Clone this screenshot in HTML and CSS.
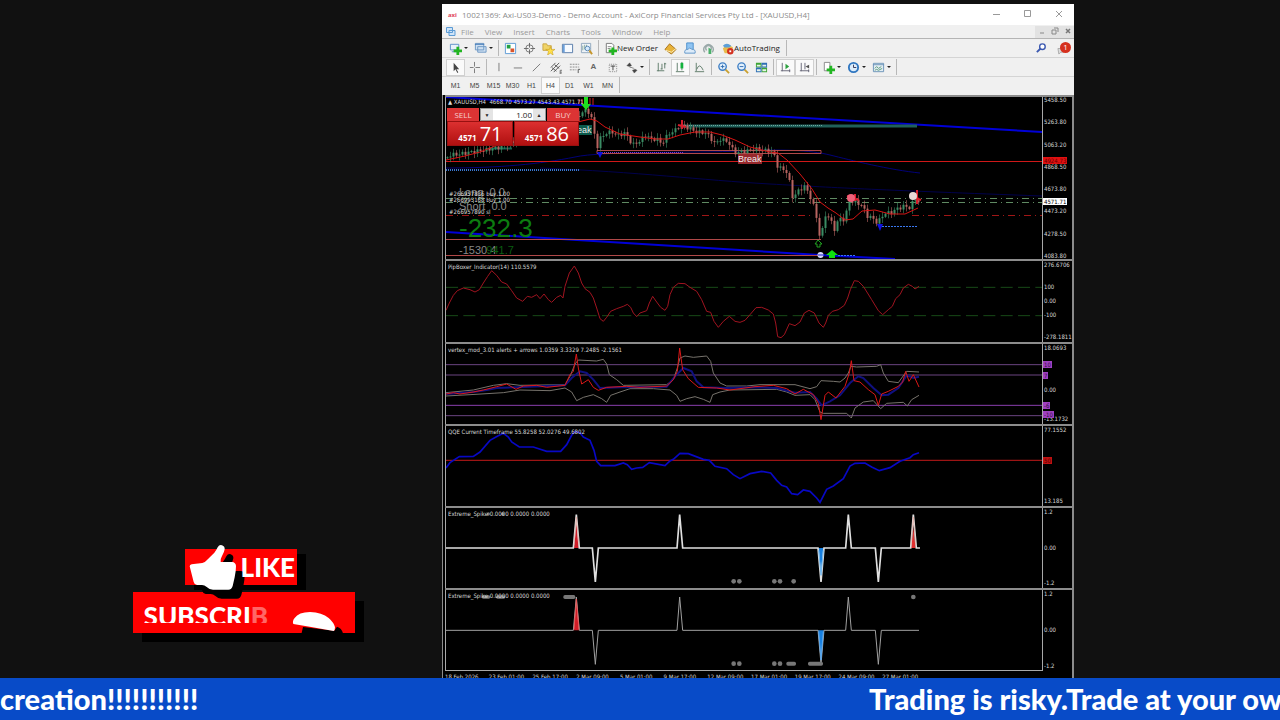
FILE: index.html
```html
<!DOCTYPE html>
<html lang="en">
<head>
    <meta charset="UTF-8">
    <meta name="viewport" content="width=device-width, initial-scale=1.0">
    <title>XAUUSD live</title>
    <link rel="stylesheet" href="styles.css">
</head>
<body>
    <main class="stage">
        <aside class="promo">
            <button class="like">
                <svg class="thumb" viewBox="200 24 174 174" aria-hidden="true">
                    <path fill="#000" transform="translate(26 27)" d="M208 94q0-5 6-6l32-4q8-2 14-9l22-22q6-7 10-16q5-9 13-6q9 3 8 12q-1 8-8 20q-6 10-4 18h34q11 1 12 12q0 16-4 34l-6 26q-3 11-13 11h-46q-12-1-20-9q-5-5-13-5h-15q-8-1-10-9z"/>
                    <path fill="#fff" d="M208 94q0-5 6-6l32-4q8-2 14-9l22-22q6-7 10-16q5-9 13-6q9 3 8 12q-1 8-8 20q-6 10-4 18h34q11 1 12 12q0 16-4 34l-6 26q-3 11-13 11h-46q-12-1-20-9q-5-5-13-5h-15q-8-1-10-9z"/>
                </svg>
                <span class="like-text">LIKE</span>
            </button>
            <button class="subscribe">
                <span class="sub-text">SUBSCRI<span class="fade">B</span></span>
                <svg class="glove" viewBox="510 225 165 75" aria-hidden="true">
                    <path fill="#000" d="M545 293l4-17 94 11 8-12q14 4 18 20v5H545z"/>
                    <path fill="#fff" d="M520 267q-4-8 4-18q12-18 46-18q36 2 56 18q16 14 19 28q0 9-4 11q-60-11-121-21z"/>
                </svg>
            </button>
        </aside>

        <section class="window">
            <header class="titlebar">
                <b class="brand">axi</b>
                <span class="title">10021369: Axi-US03-Demo - Demo Account - AxiCorp Financial Services Pty Ltd - [XAUUSD,H4]</span>
                <button class="win-btn" aria-label="Minimize"><svg width="10" height="10"><path d="M1 5.500h7" stroke="#999"/></svg></button>
                <button class="win-btn" aria-label="Maximize"><svg width="10" height="10"><path d="M1.500 1.500h6v6h-6z" stroke="#999" fill="none"/></svg></button>
                <button class="win-btn" aria-label="Close"><svg width="10" height="10"><path d="M2 2l6 6M8 2l-6 6" stroke="#999"/></svg></button>
            </header>

            <nav class="menu">
                <svg width="11" height="11"><path d="M1.500 1.500h6v5h-6zM4 4.500h6v5H4z" fill="#cfe4f8" stroke="#5b9bd5"/></svg>
                <a href="#">File</a><a href="#">View</a><a href="#">Insert</a><a href="#">Charts</a><a href="#">Tools</a><a href="#">Window</a><a href="#">Help</a>
                <span class="child-btns">
                    <button aria-label="Minimize chart"><svg width="8" height="8"><path d="M2 6h4" stroke="#888"/></svg></button>
                    <button aria-label="Restore chart"><svg width="8" height="8"><path d="M3 1h4v4M1 3h4v4H1z" stroke="#888" fill="none"/></svg></button>
                    <button aria-label="Close chart"><svg width="8" height="8"><path d="M2 2l4 4M6 2l-4 4" stroke="#777" stroke-width="1.500"/></svg></button>
                </span>
            </nav>

            <div class="toolbar standard">
                <button class="tool drop" aria-label="New chart"><svg viewBox="0 0 14 14"><path d="M1.500 2.500h9v6h-9zM3 10.500h6" fill="#e8f1fb" stroke="#5b8fc7"/><path d="M8 5h3v3h3v3h-3v3H8v-3H5V8h3z" fill="#22b522"/></svg></button>
                <button class="tool drop" aria-label="Profiles"><svg viewBox="0 0 14 14"><path d="M1.500 1.500h9v7h-9zM4 5h9v6H4z" fill="#cfe0f2" stroke="#6c97c4"/><path d="M1 2.500h10" stroke="#3f77b5"/></svg></button>
                <i class="sep"></i>
                <button class="tool" aria-label="Market watch"><svg viewBox="0 0 14 14"><path d="M1.500 1.500h11v11h-11z" fill="#fff" stroke="#5b9bd5"/><path d="M3 3h4v4H3z" fill="#23a045"/><path d="M7 7h4v4H7z" fill="#d9542b"/></svg></button>
                <button class="tool" aria-label="Data window"><svg viewBox="0 0 14 14"><circle cx="7" cy="7" r="4" fill="none" stroke="#777"/><path d="M7 1v5M7 8v5M1 7h5M8 7h5" stroke="#666"/></svg></button>
                <button class="tool" aria-label="Navigator"><svg viewBox="0 0 14 14"><path d="M1 2h4l1 2h4v5H1z" fill="#f0d468" stroke="#c9a544"/><path d="M9 5l1 3h4l-3 2 1 4-3-2-3 2 1-4-3-2h4z" fill="#ffe04a" stroke="#c79b1b" stroke-width=".6"/></svg></button>
                <button class="tool" aria-label="Terminal"><svg viewBox="0 0 14 14"><path d="M1.500 2.500h11v9h-11z" fill="#f6faff" stroke="#5479a8"/><path d="M3 3v8" stroke="#6aa0dc" stroke-width="2"/></svg></button>
                <button class="tool" aria-label="Strategy tester"><svg viewBox="0 0 14 14"><path d="M1.500 1.500h10v10h-10z" fill="#eef3f8" stroke="#8fa6bd"/><path d="M3 9V4M5 8V3M7 6V3" stroke="#8a9"/><circle cx="8" cy="7" r="2.500" fill="#d4e9fb" stroke="#5586b8"/><path d="M10 9l3 4" stroke="#c7962a" stroke-width="2"/></svg></button>
                <i class="sep"></i>
                <button class="tool wide order"><svg viewBox="0 0 14 14"><path d="M2.500 1.500h6l2 2v8h-8z" fill="#fff" stroke="#777"/><path d="M4 5h4M4 7h3" stroke="#888"/><path d="M8 6h3v2h3v3h-3v3H8v-3H5V8h3z" fill="#22b522"/></svg>New Order</button>
                <button class="tool" aria-label="MetaEditor"><svg viewBox="0 0 14 14"><path d="M1 8l5-6 7 6-5 5z" fill="#e7b23a" stroke="#a8731b"/><path d="M2 9l6 2 5-4" stroke="#fff3c4" fill="none"/></svg></button>
                <button class="tool" aria-label="MQL5 community"><svg viewBox="0 0 14 14"><path d="M4 1h7v7H4z" fill="#8fc4f2" stroke="#4b8ecb"/><path d="M2 12q-1-4 3-4 2-3 5 0 4 0 3 4z" fill="#dcebf9" stroke="#5f94c8"/></svg></button>
                <button class="tool" aria-label="Signals"><svg viewBox="0 0 14 14"><path d="M3 11a5 5 0 1 1 8 0M5 9a3 3 0 1 1 4 0" fill="none" stroke="#9aa9a9" stroke-width="1.500"/><path d="M7 6v7h3V8z" fill="#49b06a"/></svg></button>
                <button class="tool wide auto"><svg viewBox="0 0 14 14"><path d="M2 7l5-5 6 4-4 6H4z" fill="#e8bb4a"/><path d="M2 4q4-4 9 0l-2 2H4z" fill="#5c9fd8"/><circle cx="10" cy="10" r="3.500" fill="#d3301f"/><path d="M9 9h2v2H9z" fill="#fff"/></svg>AutoTrading</button>
                <i class="sep"></i>
                <span class="status">
                    <button class="tool" aria-label="Search"><svg viewBox="0 0 14 14"><circle cx="8" cy="5" r="3" fill="#fff" stroke="#3b58b0" stroke-width="1.500"/><path d="M6 7l-4 4" stroke="#3b58b0" stroke-width="2"/></svg></button>
                    <button class="tool" aria-label="Notifications"><svg viewBox="0 0 14 14"><path d="M1 7h6v4H4l-2 2z" fill="#ddd" stroke="#aaa"/></svg><span class="badge">1</span></button>
                </span>
            </div>

            <div class="toolbar">
                <button class="tool on" aria-label="Cursor"><svg viewBox="0 0 14 14"><path d="M5 2v9l2-2 2 4 1-1-2-3h3z" fill="#444"/></svg></button>
                <button class="tool" aria-label="Crosshair"><svg viewBox="0 0 14 14"><path d="M7 1v5M7 8v5M2 7h4M8 7h5" stroke="#777"/></svg></button>
                <i class="sep"></i>
                <button class="tool" aria-label="Vertical line"><svg viewBox="0 0 14 14"><path d="M7.500 2v9" stroke="#777"/></svg></button>
                <button class="tool" aria-label="Horizontal line"><svg viewBox="0 0 14 14"><path d="M3 7.500h9" stroke="#777"/></svg></button>
                <button class="tool" aria-label="Trendline"><svg viewBox="0 0 14 14"><path d="M3 11l8-8" stroke="#777"/></svg></button>
                <button class="tool" aria-label="Channel"><svg viewBox="0 0 14 14"><path d="M2 11l9-9M2 7l5-5M5 12l7-7M3 7l5 4M6 4l5 4" stroke="#555"/><path d="M12 10v4m0-4h2m-2 2h2m-2 2h2" stroke="#555" stroke-width=".8"/></svg></button>
                <button class="tool" aria-label="Fibonacci"><svg viewBox="0 0 14 14"><path d="M2 3.500h10M2 6.500h10M2 9.500h7" stroke="#888" stroke-dasharray="2 1"/><path d="M11 13v-4h2" stroke="#555" fill="none"/></svg></button>
                <button class="tool letter">A</button>
                <button class="tool" aria-label="Text label"><svg viewBox="0 0 14 14"><path d="M3.500 3.500h8v8h-8z" fill="none" stroke="#888" stroke-dasharray="1 1"/><path d="M5 5.500h5M7.500 5v5" stroke="#444"/></svg></button>
                <button class="tool drop" aria-label="Arrows"><svg viewBox="0 0 14 14"><path d="M2 5l3-3 2 3-2 1zM8 10l3-1 2 1-3 3zM5 7h2l3 1" fill="#444" stroke="#555" stroke-width=".5"/></svg></button>
                <i class="sep"></i>
                <button class="tool" aria-label="Bar chart"><svg viewBox="0 0 14 14"><path d="M3.500 2v9M2 10.500h8M7.500 3v6M10.500 2v6M6 8.500h2M10 3h2" stroke="#5d7a68"/></svg></button>
                <button class="tool on" aria-label="Candlesticks"><svg viewBox="0 0 14 14"><path d="M3.500 2v9M2 11.500h9M8.500 1v9" stroke="#5d7a68"/><path d="M7 2h3v6H7z" fill="#12b23c"/></svg></button>
                <button class="tool" aria-label="Line chart"><svg viewBox="0 0 14 14"><path d="M3.500 2v9M2 11.500h10M4 9q3-8 7 1" stroke="#5d7a68" fill="none"/></svg></button>
                <i class="sep"></i>
                <button class="tool" aria-label="Zoom in"><svg viewBox="0 0 14 14"><path d="M9 9l4 4" stroke="#c9a02f" stroke-width="2"/><circle cx="6" cy="6" r="4" fill="#e3f1fd" stroke="#3f7fc4" stroke-width="1.500"/><path d="M4 6h4M6 4v4" stroke="#2d6bb0"/></svg></button>
                <button class="tool" aria-label="Zoom out"><svg viewBox="0 0 14 14"><path d="M9 9l4 4" stroke="#c9a02f" stroke-width="2"/><circle cx="6" cy="6" r="4" fill="#e3f1fd" stroke="#3f7fc4" stroke-width="1.500"/><path d="M4 6h4" stroke="#2d6bb0"/></svg></button>
                <button class="tool" aria-label="Tile windows"><svg viewBox="0 0 14 14"><path d="M1 2h6v5H1zM7 7h6v5H7z" fill="#3fa535"/><path d="M7 2h6v5H7zM1 7h6v5H1z" fill="#2f6fb5"/><path d="M2 4h4v2H2zM8 4h4v2H8zM2 9h4v2H2zM8 9h4v2H8z" fill="#e8f3ea"/></svg></button>
                <i class="sep"></i>
                <button class="tool on" aria-label="Auto scroll"><svg viewBox="0 0 14 14"><path d="M3.500 2v9M2 10.500h10M11.500 9v3" stroke="#667" fill="none"/><path d="M7 3l4 3-4 3z" fill="#2ca13f"/></svg></button>
                <button class="tool on" aria-label="Chart shift"><svg viewBox="0 0 14 14"><path d="M3.500 2v9M2 10.500h10M7.500 2v7M11.500 9v3" stroke="#667"/><path d="M12 4v4L8 6z" fill="#555"/></svg></button>
                <i class="sep"></i>
                <button class="tool drop" aria-label="Indicators"><svg viewBox="0 0 14 14"><path d="M2.500 1.500h6v9h-6z" fill="#fff" stroke="#888"/><path d="M8 5h3v3h3v3h-3v3H8v-3H5V8h3z" fill="#22b522"/></svg></button>
                <button class="tool drop" aria-label="Periods"><svg viewBox="0 0 14 14"><circle cx="7" cy="7" r="5" fill="#dcedfb" stroke="#2f76c0" stroke-width="2"/><path d="M7 4v3h3" stroke="#335" fill="none"/></svg></button>
                <button class="tool drop" aria-label="Templates"><svg viewBox="0 0 14 14"><path d="M1.500 2.500h11v9h-11z" fill="#e3edf4" stroke="#6a93b8"/><path d="M1 4h12" stroke="#6a93b8"/><path d="M3 8l2-2 2 2 3-2M3 10l2-1 2 1 4-2" stroke="#5a9a78" fill="none"/></svg></button>
                <i class="sep"></i>
            </div>

            <div class="toolbar periods">
                <button class="tool">M1</button><button class="tool">M5</button><button class="tool">M15</button><button class="tool">M30</button><button class="tool">H1</button><button class="tool on">H4</button><button class="tool">D1</button><button class="tool">W1</button><button class="tool">MN</button>
                <i class="sep"></i>
            </div>

            <div class="charts">
                <!-- price -->
                <div class="panel main">
                    <div class="plot">
                        <svg viewBox="446 97 596 162" preserveAspectRatio="none" fill="none">
                            <path d="M446 168C500 168 540 164 575 157C600 151 700 153 740 151S810 150 830 155S890 170 920 173" stroke="#000078"/>
                            <path d="M540 168C640 172 700 180 770 184S880 190 1042 196" stroke="#00004c"/>
                            <path d="M446 97L1042 132M446 232L820 255L895 259" stroke="#0000d8" stroke-width="2"/>
                            <path d="M446 170h134" stroke="#3a78d0" stroke-width="2" stroke-dasharray="1 1"/>
                            <path d="M446 161.500h596" stroke="#d01818"/>
                            <path d="M446 198.500h596M446 202.500h596" stroke="#5f8a62" stroke-dasharray="7 4 1 4"/>
                            <path d="M446 215.500h366M912 215.500h130" stroke="#a01616" stroke-dasharray="7 4 1 4"/>
                            <path d="M446 239.500h375M446 255.500h375M597 150.500h224v3h-224z" stroke="#b04848"/>
                            <path d="M600 152.500h84" stroke="#7038d8" stroke-dasharray="1 1"/>
                            <path d="M683 126h234" stroke="#20605a" stroke-width="3"/>
                            <path d="M683 125.500h140" stroke="#70a8a0" stroke-dasharray="1 1"/>
                            <path d="M490 148.500h22" stroke="#146050" stroke-width="2"/>
                            <path d="M882 226.500h35M838 255.500h17" stroke="#3a78f0" stroke-dasharray="2 1"/>
                            <g id="candles"></g>
                            <path d="M446 160L465 156L480 152L495 146L578 122L590 119L597 121L605 127L620 134L640 137L655 139L668 139L680 135L695 132L710 132L722 135L735 140L750 147L770 152L778 153L787 160L800 174L812 189L820 202L828 208L836 213L845 220L853 219L862 211L875 210L890 214L905 214L918 208" stroke="#d81414"/>
                            <path d="M584 97h4v7h3l-5 6-5-6h3z" fill="#1ee01e"/>
                            <path d="M579 99v5M582 99v5M590 98v6M593 98v7" stroke="#d02020"/>
                            <path d="M682 120v9M678 125l8 2M847 196l12 4M855 194v7M917 190v14M913 197l8 3" stroke="#d81c2c" stroke-width="2"/>
                            <circle cx="851" cy="198" r="4" fill="#f06078"/>
                            <circle cx="913" cy="196" r="4" fill="#e8d8d8"/>
                            <path d="M597 152h6l-3 6zM877 224h6l-3 7z" fill="#1010e0"/>
                            <path d="M818 240l4 4h-2v3h-3v-3h-2z" stroke="#20a020"/>
                            <circle cx="820.500" cy="255" r="3" fill="#d8d8ff"/><path d="M818 255h6" stroke="#2020c0"/>
                            <path d="M832 250l6 5h-3v3h-6v-3h-3z" fill="#10e010"/>
                        </svg>
                        <span class="caption">▲ XAUUSD,H4 &nbsp;4668.70 4573.27 4543.43 4571.71</span>
                        <span class="tag break">Break</span>
                        <span class="tag eak">eak</span>
                        <div class="stats">
                            <span>Long &nbsp;0.0</span>
                            <span>Short &nbsp;0.0</span>
                            <span class="pips">-232.3</span>
                            <span>-1530.4<em>941.7</em></span>
                        </div>
                        <div class="orders"><span>#266957836 buy 1.00</span><span>#266995168 buy 1.00</span><span class="sl">#266957890 sl</span></div>
                        <form class="trade">
                            <div class="trade-row">
                                <button type="button" class="side">SELL</button>
                                <span class="volume">
                                    <button type="button" aria-label="Decrease">▼</button>
                                    <input type="text" value="1.00" aria-label="Volume">
                                    <button type="button" aria-label="Increase">▲</button>
                                </span>
                                <button type="button" class="side">BUY</button>
                            </div>
                            <div class="trade-row">
                                <button type="button" class="price"><b>4571</b>71</button>
                                <button type="button" class="price"><b>4571</b>86</button>
                            </div>
                        </form>
                    </div>
                    <div class="axis">
                        <span>5458.50</span><span>5263.80</span><span>5063.20</span><span>4868.50</span><span>4673.80</span><span>4473.20</span><span>4278.50</span><span>4083.80</span>
                        <span class="mark level">4924.73</span>
                        <span class="mark bid">4571.71</span>
                    </div>
                </div>

                <!-- PipBoxer -->
                <div class="panel pip">
                    <div class="plot">
                        <svg viewBox="18 9 1788 243" preserveAspectRatio="none" fill="none" stroke-width="3">
                            <path d="M18 88h1788M18 173h1788" stroke="#174a17" stroke-dasharray="36 16"/>
                            <path d="M18 157L28 135 40 112 52 98 70 90 90 95 105 102 118 95 130 75 143 55 155 38 170 52 185 72 200 78 215 98 230 120 248 130 262 115 275 118 290 110 300 122 312 108 325 125 335 133 350 118 362 112 369 120 375 85 388 45 403 24 415 45 425 75 435 92 450 103 460 120 470 150 480 182 490 190 500 178 512 160 530 152 550 145 562 139 572 148 580 165 590 176 600 165 620 158 628 135 638 115 650 132 662 148 675 157 683 145 690 110 700 88 715 76 735 77 750 88 770 100 785 125 800 160 812 163 822 190 835 208 850 190 868 175 885 190 900 193 915 187 930 170 948 149 965 148 985 156 1000 168 1007 195 1013 236 1023 239 1033 230 1048 197 1065 203 1080 192 1093 165 1107 157 1123 165 1137 195 1150 208 1157 195 1165 172 1177 160 1195 155 1213 142 1223 120 1231 95 1243 68 1255 70 1270 85 1295 125 1315 158 1328 170 1345 155 1357 145 1367 122 1380 110 1390 90 1405 79 1417 85 1425 93 1437 85" stroke="#a01420"/>
                        </svg>
                        <span class="caption">PipBoxer_Indicator(14) 110.5579</span>
                    </div>
                    <div class="axis"><span>276.6706</span><div class="mid"><span>100</span><span>0.00</span><span>-100</span></div><span>-278.1811</span></div>
                </div>

                <!-- vertex -->
                <div class="panel">
                    <div class="plot">
                        <svg viewBox="18 258 1788 240" preserveAspectRatio="none" fill="none" stroke-width="3">
                            <path d="M18 320h1788M18 351h1788M18 473h1788" stroke="#6a4480"/>
                            <path d="M18 442h1788" stroke="#8a3fae"/>
                            <path d="M18 404L100 396 160 382 200 377 240 382 375 380 390 355 405 318 415 306 470 309 490 304 500 318 508 350 530 365 550 382 680 380 700 365 712 330 720 300 735 294 760 298 800 294 812 310 820 345 840 375 860 384 920 384 960 380 1065 380 1110 392 1130 386 1143 368 1180 370 1200 372 1215 360 1225 345 1233 325 1250 327 1310 325 1322 320 1330 345 1345 370 1375 374 1385 360 1400 340 1437 342" stroke="#77736c"/>
                            <path d="M18 414L90 410 190 404 240 396 330 398 375 390 395 402 410 428 430 418 460 410 485 422 500 433 512 412 540 402 570 392 640 392 690 396 710 412 720 430 740 422 765 416 790 424 810 433 818 410 840 402 870 396 1010 394 1040 402 1065 412 1110 410 1125 425 1140 462 1150 466 1220 466 1234 480 1245 450 1270 432 1300 428 1322 452 1340 436 1390 433 1402 444 1415 425 1437 412" stroke="#77736c"/>
                            <path d="M18 408L100 402 140 396 170 390 250 387 375 382 395 360 420 340 440 345 460 365 480 390 540 388 680 386 705 355 730 330 755 340 770 370 790 388 860 390 945 388 1010 390 1065 404 1110 402 1130 422 1145 442 1170 430 1200 412 1230 375 1255 355 1270 360 1300 390 1325 412 1345 410 1375 390 1400 352 1420 360 1437 356" stroke="#101080" stroke-width="6"/>
                            <path d="M18 408L40 404 60 408 100 402 130 396 170 386 200 378 228 394 250 384 290 382 320 388 375 382 390 350 400 340 409 288 415 330 425 378 445 365 460 388 475 397 500 388 560 385 600 388 680 384 700 365 712 340 719 270 728 335 745 362 775 388 830 390 870 396 945 386 1000 382 1040 392 1065 408 1090 394 1120 410 1135 436 1143 485 1155 412 1165 402 1188 420 1215 385 1228 345 1234 308 1242 368 1260 372 1285 395 1305 410 1315 442 1325 408 1345 400 1375 385 1388 372 1397 340 1407 370 1420 350 1437 387" stroke="#dc1818"/>
                        </svg>
                        <span class="caption">vertex_mod_3.01 alerts + arrows 1.0359 3.3329 7.2485 -2.1561</span>
                    </div>
                    <div class="axis"><span>18.0693</span><span class="low">0.00</span><span>-13.1732</span>
                        <span class="mark v1">10</span><span class="mark v2">7</span><span class="mark v3">-6</span><span class="mark v4">-10</span>
                    </div>
                </div>

                <!-- QQE -->
                <div class="panel">
                    <div class="plot">
                        <svg viewBox="18 12 1788 240" preserveAspectRatio="none" fill="none" stroke-width="5">
                            <path d="M18 115h1788" stroke="#9c1414" stroke-width="4"/>
                            <path d="M18 138L30 122 58 104 100 103 120 90 150 55 172 43 190 34 205 45 215 60 238 75 280 75 320 88 362 88 380 68 395 40 405 28 420 32 430 45 450 55 462 85 470 118 482 131 525 131 550 123 562 128 575 142 590 138 608 136 628 122 675 131 690 117 700 112 720 94 745 95 790 112 808 115 825 133 860 140 880 158 900 170 930 155 965 148 992 153 1010 175 1025 190 1040 195 1055 215 1073 218 1090 204 1110 208 1130 228 1140 241 1160 202 1180 192 1210 170 1230 132 1245 124 1275 123 1295 135 1318 146 1350 137 1380 118 1410 107 1420 98 1437 92" stroke="#0808c4"/>
                        </svg>
                        <span class="caption">QQE Current Timeframe 55.8258 52.0276 49.6802</span>
                    </div>
                    <div class="axis"><span>77.1552</span><span>13.185</span><span class="mark q">50</span></div>
                </div>

                <!-- spikes, strong -->
                <div class="panel">
                    <div class="plot">
                        <svg viewBox="18 258 1788 240" preserveAspectRatio="none" fill="none" stroke-width="5">
                            <path d="M402 378l7-90 8 90z" fill="#d01c28"/><path d="M1135 378l8 90 8-90z" fill="#1880e0"/><path d="M1413 378l7-60 7 60z" fill="#e03030"/>
                            <path d="M18 378H400L409 278 418 378H457L466 480 475 378H711L719 278 728 378H1134L1143 480 1152 378H1217L1225 278 1234 378H1306L1315 480 1324 378H1412L1420 278 1429 378H1440" stroke="#e0e0e0"/>
                            <path d="M402 370l7-85 8 85M1413 370l7-85 7 85" stroke="#e8a8a0" stroke-width="2"/><path d="M1136 385l7 75 7-75" stroke="#70b8f0" stroke-width="3"/>
                            <g fill="#777"><circle cx="881" cy="478" r="7"/><circle cx="898" cy="478" r="7"/><circle cx="1003" cy="478" r="7"/><circle cx="1020" cy="478" r="7"/><circle cx="1061" cy="478" r="7"/><circle cx="145" cy="276" r="5"/><circle cx="188" cy="276" r="5"/></g>
                        </svg>
                        <span class="caption">Extreme_Spike 0.0000 0.0000 0.0000</span>
                    </div>
                    <div class="axis"><span>1.2</span><span>0.00</span><span>-1.2</span></div>
                </div>

                <!-- spikes, weak -->
                <div class="panel last">
                    <div class="plot">
                        <svg viewBox="18 15 1788 240" preserveAspectRatio="none" fill="none" stroke-width="3">
                            <path d="M401 136l8-100 9 100z" fill="#d01c28"/><path d="M1134 136l9 100 9-100z" fill="#1880e0"/>
                            <path d="M18 136H400L409 36 418 136H457L466 238 475 136H711L719 36 728 136H1134L1143 238 1152 136H1217L1225 36 1234 136H1306L1315 238 1324 136H1437" stroke="#a0a0a0"/>
                            <path d="M402 132l7-90 8 90" stroke="#e85858"/><path d="M1136 140l7 85 7-85" stroke="#58a8f0"/>
                            <g fill="#777"><circle cx="881" cy="236" r="7"/><circle cx="898" cy="236" r="7"/><circle cx="1003" cy="236" r="7"/><circle cx="1020" cy="236" r="7"/><circle cx="1420" cy="36" r="7"/>
                            <rect x="1039" y="230" width="29" height="12" rx="5"/><rect x="1104" y="230" width="45" height="12" rx="5"/><rect x="370" y="30" width="36" height="12" rx="5"/><rect x="125" y="31" width="26" height="10" rx="5"/><rect x="168" y="31" width="28" height="10" rx="5"/></g>
                        </svg>
                        <span class="caption">Extreme_Spike 0.0000 0.0000 0.0000</span>
                    </div>
                    <div class="axis"><span>1.2</span><span>0.00</span><span>-1.2</span></div>
                </div>

                <div class="dates">
                    <span>18 Feb 2026</span><span>23 Feb 01:00</span><span>25 Feb 17:00</span><span>2 Mar 09:00</span><span>5 Mar 01:00</span><span>9 Mar 17:00</span><span>12 Mar 09:00</span><span>17 Mar 01:00</span><span>19 Mar 17:00</span><span>24 Mar 09:00</span><span>27 Mar 01:00</span>
                </div>
            </div>
        </section>
    </main>

    <footer class="ticker">
        <span>creation!!!!!!!!!!!</span>
        <span>Trading is risky.Trade at your own</span>
    </footer>

    <script src="chart.js"></script>
</body>
</html>
```
FILE: styles.css
```css
* {
    box-sizing: border-box;
}
body {
    margin: 0;
    height: 100vh;
    display: grid;
    grid-template-rows: minmax(0, 1fr) 42px;
    background-color: #111;
    font-family: "Open Sans", "Noto Sans", sans-serif;
    overflow: hidden;
}
button, input {
    font: inherit;
    color: inherit;
    border: none;
    padding: 0;
    margin: 0;
    background: none;
}
.stage {
    display: grid;
    grid-template-columns: 442fr 632fr 206fr;
    grid-template-rows: minmax(0, 1fr);
    padding-top: 4px;
    overflow: hidden;
}

/* like / subscribe */
.promo {
    display: flex;
    flex-direction: column;
    justify-content: flex-end;
    align-items: flex-start;
    gap: 7px;
    padding: 0 0 45px 30%;
}
.like {
    position: relative;
    width: 112px;
    height: 36px;
    margin-left: 52px;
    padding-left: 56px;
    background-color: #f00;
    box-shadow: 9px 5px 0 #000;
    color: #fff;
    font: 900 26px/36px Lato, sans-serif;
    text-align: left;
    z-index: 1;
}
.thumb {
    position: absolute;
    left: 2px;
    top: -6px;
    width: 58px;
    height: 58px;
}
.like-text {
    position: relative;
}
.subscribe {
    position: relative;
    width: 222px;
    height: 41px;
    padding-left: 11px;
    background-color: #f00;
    box-shadow: 9px 9px 0 #000;
    color: #fff;
    text-align: left;
}
.sub-text {
    display: block;
    height: 20px;
    overflow: hidden;
    font: 900 26px/26px Lato, sans-serif;
}
.fade {
    opacity: 0.4;
}
.glove {
    position: absolute;
    left: 157px;
    top: 18px;
    width: 55px;
    height: 25px;
}

/* terminal window */
.window {
    background-color: #f0f0f0;
    color: #222;
    font-size: 8px;
    line-height: 10px;
    min-width: 0;
}
.titlebar {
    display: flex;
    align-items: center;
    height: 21px;
    padding-left: 6px;
    background-color: #fff;
    color: #8c8c8c;
}
.brand {
    width: 14px;
    color: #e0425a;
    font-size: 6px;
}
.title {
    flex: 1;
    white-space: nowrap;
}
.win-btn {
    width: 31px;
    height: 20px;
}
.menu {
    display: flex;
    align-items: center;
    gap: 11px;
    height: 14px;
    padding-left: 3px;
    border-bottom: 1px solid #b4b4b4;
}
.menu svg {
    margin-right: -6px;
}
.menu a {
    color: #9a9a9a;
    text-decoration: none;
}
.child-btns {
    display: flex;
    margin-left: auto;
}
.child-btns button {
    width: 13px;
    height: 12px;
    background-color: #e2e2e2;
}
.child-btns svg {
    margin: 0;
}
.toolbar {
    display: flex;
    align-items: center;
    height: 19px;
    padding: 0 1px 0 4px;
}
.toolbar.standard {
    height: 18px;
}
.toolbar + .toolbar {
    border-top: 1px solid #d4d4d4;
}
.tool {
    position: relative;
    display: flex;
    align-items: center;
    justify-content: center;
    width: 19px;
    height: 17px;
    white-space: nowrap;
}
.tool svg {
    width: 13px;
    height: 13px;
    flex: none;
}
.tool.on {
    background-color: #fafafa;
    border: 1px solid #d0d0d0;
}
.tool.drop {
    width: 25px;
    justify-content: flex-start;
    padding-left: 3px;
}
.tool.drop::after {
    content: "";
    margin-left: 2px;
    border: 2px solid transparent;
    border-top-color: #222;
    border-bottom: none;
}
.tool.wide {
    justify-content: flex-start;
    padding-left: 3px;
}
.tool.order {
    width: 60px;
}
.tool.auto {
    width: 66px;
}
.letter {
    font: bold 8px/10px "Liberation Sans", sans-serif;
    color: #666;
}
.sep {
    width: 5px;
    height: 16px;
    background: linear-gradient(#b8b8b8, #b8b8b8) 2px 0 / 1px 16px no-repeat;
}
.status {
    display: flex;
    margin-left: auto;
    gap: 3px;
}
.badge {
    position: absolute;
    right: 2px;
    top: 2px;
    width: 11px;
    height: 11px;
    border-radius: 50%;
    background-color: #d5301e;
    color: #fff;
}
.toolbar.periods {
    height: 19px;
    padding-bottom: 2px;
    font: 7px/9px "Liberation Sans", sans-serif;
    color: #444;
}

/* charts */
.charts {
    background-color: #000;
    border: solid #8c8c8c;
    border-width: 0 2px 0 1px;
    padding-left: 2px;
    color: #d8d8d8;
    font: 6px/6px "DejaVu Sans Condensed", "DejaVu Sans", sans-serif;
}
.panel {
    display: grid;
    grid-template-columns: minmax(0, 1fr) 29px;
    height: 82px;
    border-top: 2px solid #8c8c8c;
}
.panel.main {
    height: 164px;
}
.panel.pip, .panel.last {
    height: 83px;
}
.panel.last .plot {
    border-bottom: 1px solid #a8a8a8;
}
.plot {
    position: relative;
    min-width: 0;
    border: solid #a8a8a8;
    border-width: 0 1px;
    overflow: hidden;
}
.plot > svg {
    display: block;
    width: 100%;
    height: 100%;
}
.caption {
    position: absolute;
    left: 2px;
    top: 3px;
    white-space: nowrap;
}
.main .caption {
    top: 2px;
}
.axis {
    position: relative;
    display: flex;
    flex-direction: column;
    justify-content: space-between;
    padding: 1px 0 2px 1px;
    white-space: nowrap;
}
.main .axis {
    padding: 0;
    padding-left: 1px;
}
.mid {
    display: flex;
    flex-direction: column;
    gap: 8px;
}
.low {
    margin-top: 12px;
}
.mark {
    position: absolute;
    left: 0;
    padding: 0 1px;
    background-color: #a040c0;
    color: #301040;
    line-height: 7px;
}
.bid {
    top: 101px;
    background-color: #fff;
    color: #000;
}
.level {
    top: 60px;
    background-color: #e01010;
    color: #600;
}
.v1 { top: 17px; }
.v2 { top: 28px; }
.v3 { top: 58px; }
.v4 { top: 67px; }
.q {
    top: 31px;
    background-color: #c01010;
    color: #500;
}
.tag {
    position: absolute;
    color: #eee;
    font: 9px/10px "Liberation Sans", sans-serif;
}
.break {
    left: 49%;
    top: 57px;
    background-color: #98282c;
}
.eak {
    left: 131px;
    top: 28px;
    background-color: #0c5a4c;
}
.stats {
    position: absolute;
    left: 13px;
    top: 88px;
    display: flex;
    flex-direction: column;
    color: #888;
    font: 11px/14px "Liberation Sans", sans-serif;
}
.pips {
    color: #0c7c10;
    font-size: 26px;
    line-height: 30px;
}
.stats em {
    margin-left: -10px;
    color: #0a5c10;
    font-style: normal;
}
.orders {
    position: absolute;
    left: 3px;
    top: 94px;
    display: flex;
    flex-direction: column;
    color: #ddd;
}
.orders .sl {
    margin-top: 6px;
}
.trade {
    position: absolute;
    left: 1px;
    top: 11px;
    width: 132px;
    color: #fff;
    font-family: "Open Sans", sans-serif;
}
.trade-row {
    display: flex;
    gap: 1px;
}
.side {
    flex: none;
    width: 32px;
    height: 13px;
    background-color: #dc3434;
    color: #f4d0d0;
    font-size: 8px;
    line-height: 12px;
}
.volume {
    display: flex;
    flex: 1;
    min-width: 0;
    background-color: #e4e4e4;
    color: #222;
    border: 1px solid #999;
}
.volume button {
    flex: none;
    width: 12px;
    font-size: 5px;
}
.volume input {
    flex: 1;
    min-width: 0;
    background-color: #fff;
    font-size: 8px;
    text-align: right;
    padding-right: 1px;
}
.price {
    display: flex;
    flex: 1;
    align-items: baseline;
    justify-content: flex-end;
    gap: 3px;
    height: 25px;
    padding-right: 9px;
    background: linear-gradient(#dc3030, #b01010);
    border: 1px solid #981010;
    font-size: 20px;
    line-height: 24px;
}
.price b {
    font-size: 8px;
}
.dates {
    display: grid;
    grid-template-columns: repeat(11, 44fr) 147fr;
    padding-top: 3px;
    white-space: nowrap;
}

/* ticker */
.ticker {
    display: grid;
    grid-template-columns: 869fr 411fr;
    align-items: center;
    background-color: #084bc8;
    color: #fff;
    font: 900 29px/42px Lato, sans-serif;
    white-space: nowrap;
    overflow: hidden;
    z-index: 1;
}
.ticker span {
    min-width: 0;
}
```
FILE: chart.js
```js
// turning points of the price, x and y in plot units
const prices = [
    [446, 158], [450, 155], [460, 154], [470, 152], [485, 150], [500, 147], [576, 118], [584, 110],
    [588, 112], [592, 120], [596, 149], [600, 138], [606, 133], [612, 132], [618, 135], [625, 133],
    [632, 145], [638, 142], [646, 135], [652, 140], [656, 138], [661, 144], [668, 134], [675, 130],
    [680, 125], [686, 127], [696, 132], [706, 133], [715, 144], [720, 139], [728, 142], [734, 153],
    [745, 151], [756, 149], [773, 152], [776, 165], [783, 170], [787, 172], [792, 197], [797, 192],
    [804, 186], [811, 199], [815, 212], [820, 240], [825, 215], [829, 218], [834, 229], [839, 218],
    [844, 220], [849, 201], [856, 202], [862, 206], [867, 216], [872, 218], [877, 223], [884, 213],
    [890, 213], [896, 209], [904, 206], [910, 208], [914, 198], [918, 202]
];

function priceAt(x) {
    let i = 1;
    while (i < prices.length - 1 && prices[i][0] < x) i++;
    const [x0, y0] = prices[i - 1];
    const [x1, y1] = prices[i];
    return y0 + (y1 - y0) * (x - x0) / (x1 - x0);
}

let svg = '';
let open = 158;
for (let i = 0; i < 158; i++) {
    const x = 447 + i * 3;
    const close = priceAt(x) + Math.sin(i * 2.3) * 2;
    const top = Math.min(open, close);
    const size = Math.max(1, Math.abs(close - open));
    const color = close < open ? '#3a8c64' : '#b86460';
    const wick = 1 + Math.abs(Math.sin(i * 5.1)) * 4;
    svg += `<path d="M${x + 0.5} ${top - wick}V${top + size + wick}" stroke="${color}" stroke-opacity=".6"/>`;
    svg += `<rect x="${x - 0.5}" y="${top}" width="2" height="${size}" fill="${color}"/>`;
    open = close;
}
document.getElementById('candles').innerHTML = svg;
```
